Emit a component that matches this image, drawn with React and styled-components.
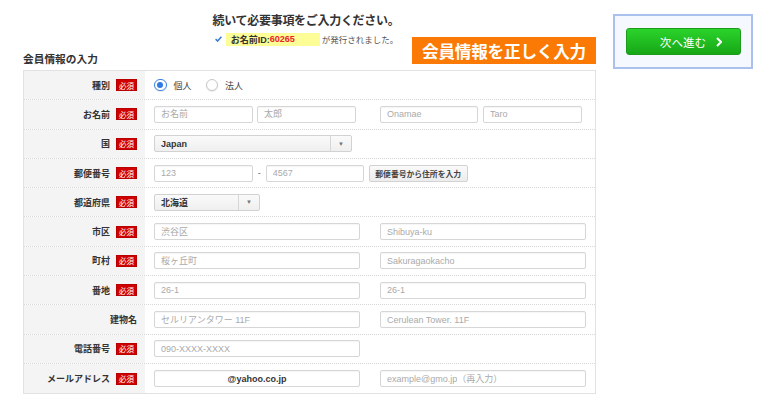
import React from "react";
import styled, { createGlobalStyle } from "styled-components";

const Global = createGlobalStyle`
  html, body { margin: 0; padding: 0; background: #fff; }
  body {
    font-family: "Liberation Sans", "Noto Sans CJK JP", sans-serif;
    color: #333;
  }
  * { box-sizing: border-box; }
`;

const Page = styled.div`
  display: flex;
  align-items: flex-start;
  padding-left: 23px;
  width: 780px;
  height: 407px;
  overflow: hidden;
`;

const Main = styled.div`
  position: relative;
  width: 573px;
`;

const Title = styled.h1`
  margin: 12px 0 0;
  padding-right: 7px;
  text-align: center;
  font-family: "Noto Sans CJK JP", sans-serif;
  font-size: 12px;
  line-height: 16px;
  font-weight: 700;
  letter-spacing: -0.3px;
  color: #333;
`;

const IdLine = styled.div`
  display: flex;
  justify-content: center;
  align-items: center;
  height: 14px;
  margin-top: 4px;
  padding-right: 6px;
`;

const IdBox = styled.span`
  display: flex;
  align-items: center;
  width: 94px;
  height: 13px;
  margin-left: 4px;
  padding-left: 5px;
  background: #fdfd98;
  font-size: 9px;
  font-weight: 700;
  color: #333;
`;

const IdNum = styled.span`
  color: #e8232a;
`;

const Issued = styled.span`
  margin-left: 2px;
  font-family: "Noto Sans CJK JP", sans-serif;
  font-size: 8.5px;
  color: #555;
`;

const SectionTitle = styled.h2`
  margin: 6px 0 0;
  font-family: "Noto Sans CJK JP", sans-serif;
  font-size: 10.7px;
  line-height: 14px;
  font-weight: 700;
  color: #333;
`;

const Banner = styled.div`
  position: absolute;
  left: 389px;
  top: 37px;
  width: 184px;
  height: 27px;
  display: flex;
  align-items: center;
  justify-content: center;
  background: #fb7a05;
  color: #fff;
  font-family: "Noto Sans CJK JP", sans-serif;
  font-size: 16.6px;
  font-weight: 700;
  letter-spacing: -0.2px;
`;

const Table = styled.div`
  margin-top: 4px;
  border: 1px solid #e2e2e2;
`;

const Row = styled.div`
  display: flex;
  height: 29.3px;
  border-bottom: 1px dotted #d8d8d8;
  &:last-child { border-bottom: none; }
`;

const LabelCell = styled.div`
  width: 121px;
  flex: none;
  display: flex;
  justify-content: flex-end;
  align-items: center;
  gap: 6px;
  padding-right: 8px;
  background: #f4f4f4;
  font-family: "Noto Sans CJK JP", sans-serif;
  font-size: 9px;
  font-weight: 700;
  color: #333;
`;

const Badge = styled.span`
  width: 21px;
  height: 12px;
  display: flex;
  align-items: center;
  justify-content: center;
  background: #d10000;
  box-shadow: inset 0 0 0 1px #b80000;
  color: #fff;
  font-size: 7.5px;
  font-weight: 400;
`;

const FieldCell = styled.div`
  flex: 1;
  display: flex;
  align-items: center;
  gap: ${(p) => p.$gap ?? 20}px;
  padding-left: 9px;
`;

const Pair = styled.div`
  display: flex;
  gap: ${(p) => p.$gap}px;
`;

const Input = styled.input`
  width: ${(p) => p.$w}px;
  height: 17px;
  padding: 0 6px;
  border: 1px solid #d6d6d6;
  border-radius: 2px;
  background: #fff;
  box-shadow: inset 0 1px 1px rgba(0, 0, 0, 0.04);
  font-family: "Liberation Sans", "Noto Sans CJK JP", sans-serif;
  font-size: 9px;
  color: #333;
  text-align: ${(p) => (p.$center ? "center" : "left")};
  font-weight: ${(p) => (p.$center ? 700 : 400)};
  outline: none;
  &::placeholder { color: #aaa; }
`;

const Dash = styled.span`
  width: 12.7px;
  text-align: center;
  font-size: 9px;
  color: #666;
`;

const ZipButton = styled.button`
  width: 99px;
  height: 17px;
  margin-left: 5px;
  padding: 0;
  border: 1px solid #d2d2d2;
  border-radius: 2px;
  background: linear-gradient(#fafafa, #ececec);
  font-family: "Noto Sans CJK JP", sans-serif;
  font-size: 7.8px;
  font-weight: 700;
  color: #444;
`;

const SelectBox = styled.div`
  width: ${(p) => p.$w}px;
  height: 17px;
  display: flex;
  border: 1px solid #d2d2d2;
  border-radius: 2px;
  background: linear-gradient(#fafafa, #efefef);
`;

const SelectValue = styled.span`
  flex: 1;
  display: flex;
  align-items: center;
  padding-left: 6px;
  font-family: "Liberation Sans", "Noto Sans CJK JP", sans-serif;
  font-size: 9px;
  font-weight: 700;
  color: #333;
`;

const SelectArrow = styled.span`
  width: 21px;
  display: flex;
  align-items: center;
  justify-content: center;
  border-left: 1px solid #d6d6d6;
  color: #777;
  font-size: 6px;
`;

const RadioOption = styled.label`
  display: flex;
  align-items: center;
  gap: 7px;
  margin-right: 14px;
  font-family: "Noto Sans CJK JP", sans-serif;
  font-size: 9px;
  color: #444;
`;

const RadioDot = styled.span`
  width: 12.5px;
  height: 12.5px;
  border-radius: 50%;
  display: flex;
  align-items: center;
  justify-content: center;
  background: #fff;
  border: 1px solid ${(p) => (p.$on ? "#3a83e8" : "#c6c6c6")};
  box-shadow: 0 1px 1px rgba(0, 0, 0, 0.08);
  &::after {
    content: "";
    width: 6px;
    height: 6px;
    border-radius: 50%;
    background: ${(p) => (p.$on ? "#2f7ae5" : "transparent")};
  }
`;

const Side = styled.div`
  margin-left: 17px;
  margin-top: 14px;
`;

const NextBox = styled.div`
  width: 140px;
  height: 55px;
  display: flex;
  align-items: center;
  justify-content: center;
  border: 2px solid #a9c1ec;
  background: #f5f9ff;
`;

const NextButton = styled.button`
  width: 115px;
  height: 27px;
  display: flex;
  align-items: center;
  justify-content: center;
  gap: 10px;
  padding: 0 0 0 16px;
  border: 1px solid #1b9c1b;
  border-radius: 3px;
  background: linear-gradient(#2bd32b, #17a717);
  color: #fff;
  font-family: "Noto Sans CJK JP", sans-serif;
  font-size: 11.6px;
`;

const Req = () => <Badge>必須</Badge>;

const Check = () => (
  <svg width="7" height="6" viewBox="0 0 7 6">
    <polyline points="0.6,3.2 2.6,5 6.4,0.8" fill="none" stroke="#3b7fd9" strokeWidth="1.6" />
  </svg>
);

const Chevron = () => (
  <svg width="6" height="10" viewBox="0 0 6 10">
    <polyline points="1,1 5,5 1,9" fill="none" stroke="#fff" strokeWidth="2" />
  </svg>
);

const Field = ({ label, required = true, children, gap }) => (
  <Row>
    <LabelCell>
      {label}
      {required && <Req />}
    </LabelCell>
    <FieldCell $gap={gap}>{children}</FieldCell>
  </Row>
);

export default function App() {
  return (
    <>
      <Global />
      <Page>
        <Main>
          <Title>続いて必要事項をご入力ください。</Title>
          <IdLine>
            <Check />
            <IdBox>
              お名前ID:<IdNum>60265</IdNum>
            </IdBox>
            <Issued>が発行されました。</Issued>
          </IdLine>
          <SectionTitle>会員情報の入力</SectionTitle>
          <Banner>会員情報を正しく入力</Banner>
          <Table>
            <Field label="種別" gap={0}>
              <RadioOption>
                <RadioDot $on />
                個人
              </RadioOption>
              <RadioOption>
                <RadioDot />
                法人
              </RadioOption>
            </Field>
            <Field label="お名前" gap={24}>
              <Pair $gap={4}>
                <Input $w={99} placeholder="お名前" />
                <Input $w={99} placeholder="太郎" />
              </Pair>
              <Pair $gap={5}>
                <Input $w={98} placeholder="Onamae" />
                <Input $w={99} placeholder="Taro" />
              </Pair>
            </Field>
            <Field label="国">
              <SelectBox $w={198}>
                <SelectValue>Japan</SelectValue>
                <SelectArrow>▼</SelectArrow>
              </SelectBox>
            </Field>
            <Field label="郵便番号" gap={0}>
              <Input $w={99} placeholder="123" />
              <Dash>-</Dash>
              <Input $w={98} placeholder="4567" />
              <ZipButton>郵便番号から住所を入力</ZipButton>
            </Field>
            <Field label="都道府県">
              <SelectBox $w={106}>
                <SelectValue>北海道</SelectValue>
                <SelectArrow>▼</SelectArrow>
              </SelectBox>
            </Field>
            <Field label="市区">
              <Input $w={206} placeholder="渋谷区" />
              <Input $w={206} placeholder="Shibuya-ku" />
            </Field>
            <Field label="町村">
              <Input $w={206} placeholder="桜ヶ丘町" />
              <Input $w={206} placeholder="Sakuragaokacho" />
            </Field>
            <Field label="番地">
              <Input $w={206} placeholder="26-1" />
              <Input $w={206} placeholder="26-1" />
            </Field>
            <Field label="建物名" required={false}>
              <Input $w={206} placeholder="セルリアンタワー 11F" />
              <Input $w={206} placeholder="Cerulean Tower. 11F" />
            </Field>
            <Field label="電話番号">
              <Input $w={206} placeholder="090-XXXX-XXXX" />
            </Field>
            <Field label="メールアドレス">
              <Input $w={206} $center readOnly defaultValue="@yahoo.co.jp" />
              <Input $w={206} placeholder="example@gmo.jp（再入力）" />
            </Field>
          </Table>
        </Main>
        <Side>
          <NextBox>
            <NextButton>
              次へ進む
              <Chevron />
            </NextButton>
          </NextBox>
        </Side>
      </Page>
    </>
  );
}
